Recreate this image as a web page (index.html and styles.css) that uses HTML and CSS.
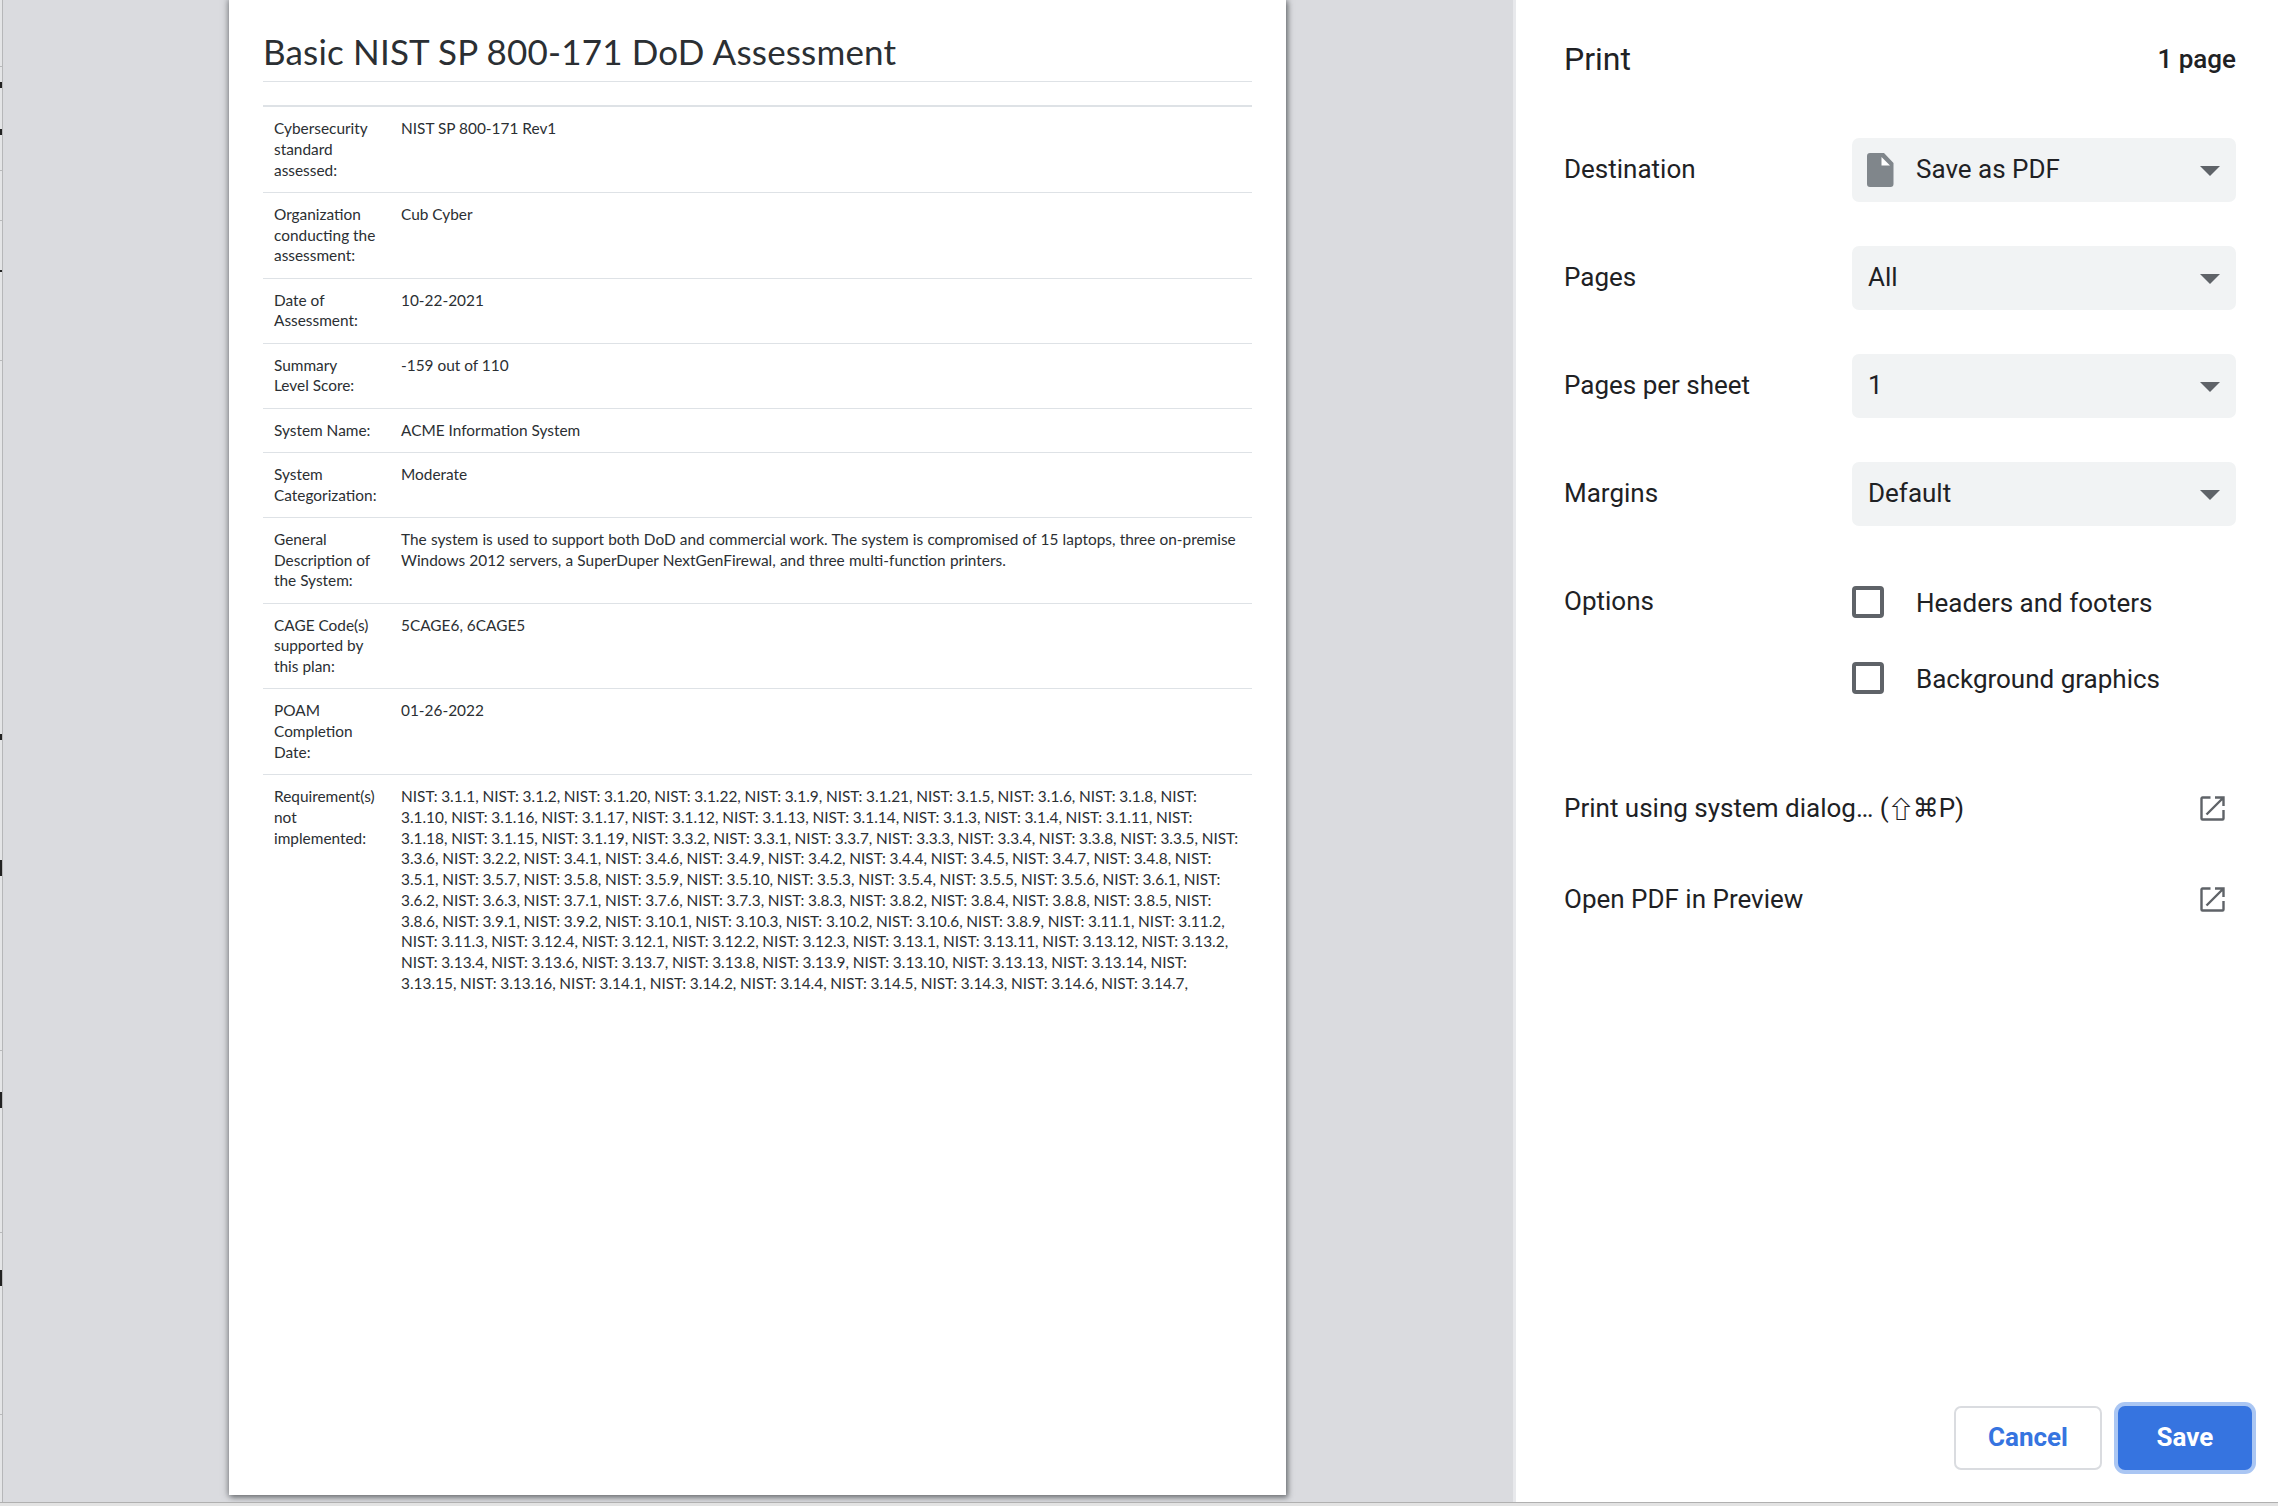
FILE: index.html
```html
<!DOCTYPE html>
<html lang="en">
<head>
<meta charset="utf-8">
<title>Print</title>
<link rel="stylesheet" href="styles.css">
</head>
<body>
<div class="app">
  <div class="main">
    <div class="edge">
      <svg class="edge-marks" width="3" height="1502" viewBox="0 0 3 1502">
        <rect x="0" y="66" width="3" height="1" fill="#b8b9bb"/>
        <rect x="0" y="82" width="2" height="6" fill="#222"/>
        <rect x="0" y="129" width="2" height="6" fill="#222"/>
        <rect x="0" y="170" width="3" height="1" fill="#b8b9bb"/>
        <rect x="0" y="220" width="3" height="1" fill="#b8b9bb"/>
        <rect x="0" y="270" width="2" height="2" fill="#222"/>
        <rect x="0" y="360" width="3" height="1" fill="#b8b9bb"/>
        <rect x="0" y="734" width="2" height="6" fill="#222"/>
        <rect x="0" y="860" width="2" height="16" fill="#222"/>
        <rect x="0" y="1050" width="3" height="1" fill="#b8b9bb"/>
        <rect x="0" y="1092" width="2" height="16" fill="#222"/>
        <rect x="0" y="1232" width="3" height="1" fill="#b8b9bb"/>
        <rect x="0" y="1270" width="2" height="16" fill="#222"/>
        <rect x="0" y="1414" width="3" height="1" fill="#b8b9bb"/>
      </svg>
    </div>
    <div class="preview">
      <div class="sheet">
        <h1 class="doc-title">Basic NIST SP 800-171 DoD Assessment</h1>
        <table class="doc-table">
          <tbody>
            <tr><th>Cybersecurity<br>standard<br>assessed:</th><td>NIST SP 800-171 Rev1</td></tr>
            <tr><th>Organization<br>conducting the<br>assessment:</th><td>Cub Cyber</td></tr>
            <tr><th>Date of<br>Assessment:</th><td>10-22-2021</td></tr>
            <tr><th>Summary<br>Level Score:</th><td>-159 out of 110</td></tr>
            <tr><th>System Name:</th><td>ACME Information System</td></tr>
            <tr><th>System<br>Categorization:</th><td>Moderate</td></tr>
            <tr><th>General<br>Description of<br>the System:</th><td class="desc">The system is used to support both DoD and commercial work. The system is compromised of 15 laptops, three on-premise<br>Windows 2012 servers, a SuperDuper NextGenFirewal, and three multi-function printers.</td></tr>
            <tr><th>CAGE Code(s)<br>supported by<br>this plan:</th><td>5CAGE6, 6CAGE5</td></tr>
            <tr><th>POAM<br>Completion<br>Date:</th><td>01-26-2022</td></tr>
            <tr><th>Requirement(s)<br>not<br>implemented:</th><td class="req-list">NIST: 3.1.1, NIST: 3.1.2, NIST: 3.1.20, NIST: 3.1.22, NIST: 3.1.9, NIST: 3.1.21, NIST: 3.1.5, NIST: 3.1.6, NIST: 3.1.8, NIST:<br>3.1.10, NIST: 3.1.16, NIST: 3.1.17, NIST: 3.1.12, NIST: 3.1.13, NIST: 3.1.14, NIST: 3.1.3, NIST: 3.1.4, NIST: 3.1.11, NIST:<br>3.1.18, NIST: 3.1.15, NIST: 3.1.19, NIST: 3.3.2, NIST: 3.3.1, NIST: 3.3.7, NIST: 3.3.3, NIST: 3.3.4, NIST: 3.3.8, NIST: 3.3.5, NIST:<br>3.3.6, NIST: 3.2.2, NIST: 3.4.1, NIST: 3.4.6, NIST: 3.4.9, NIST: 3.4.2, NIST: 3.4.4, NIST: 3.4.5, NIST: 3.4.7, NIST: 3.4.8, NIST:<br>3.5.1, NIST: 3.5.7, NIST: 3.5.8, NIST: 3.5.9, NIST: 3.5.10, NIST: 3.5.3, NIST: 3.5.4, NIST: 3.5.5, NIST: 3.5.6, NIST: 3.6.1, NIST:<br>3.6.2, NIST: 3.6.3, NIST: 3.7.1, NIST: 3.7.6, NIST: 3.7.3, NIST: 3.8.3, NIST: 3.8.2, NIST: 3.8.4, NIST: 3.8.8, NIST: 3.8.5, NIST:<br>3.8.6, NIST: 3.9.1, NIST: 3.9.2, NIST: 3.10.1, NIST: 3.10.3, NIST: 3.10.2, NIST: 3.10.6, NIST: 3.8.9, NIST: 3.11.1, NIST: 3.11.2,<br>NIST: 3.11.3, NIST: 3.12.4, NIST: 3.12.1, NIST: 3.12.2, NIST: 3.12.3, NIST: 3.13.1, NIST: 3.13.11, NIST: 3.13.12, NIST: 3.13.2,<br>NIST: 3.13.4, NIST: 3.13.6, NIST: 3.13.7, NIST: 3.13.8, NIST: 3.13.9, NIST: 3.13.10, NIST: 3.13.13, NIST: 3.13.14, NIST:<br>3.13.15, NIST: 3.13.16, NIST: 3.14.1, NIST: 3.14.2, NIST: 3.14.4, NIST: 3.14.5, NIST: 3.14.3, NIST: 3.14.6, NIST: 3.14.7,</td></tr>
          </tbody>
        </table>
      </div>
    </div>
    <aside class="panel">
      <header class="panel-head">
        <h2 class="panel-title">Print</h2>
        <span class="page-count">1 page</span>
      </header>
      <div class="setting">
        <span class="setting-label">Destination</span>
        <div class="select select-dest">
          <svg class="file-icon" width="27" height="34" viewBox="0 0 27 34"><path fill="#80868b" d="M3 0H17L26.500 10V31a3 3 0 0 1-3 3H3a3 3 0 0 1-3-3V3a3 3 0 0 1 3-3z"/><path fill="#fff" d="M14.500 4V12.500H23z"/></svg>
          <span class="select-text">Save as PDF</span>
          <i class="caret"></i>
        </div>
      </div>
      <div class="setting">
        <span class="setting-label">Pages</span>
        <div class="select"><span class="select-text">All</span><i class="caret"></i></div>
      </div>
      <div class="setting">
        <span class="setting-label">Pages per sheet</span>
        <div class="select"><span class="select-text">1</span><i class="caret"></i></div>
      </div>
      <div class="setting">
        <span class="setting-label">Margins</span>
        <div class="select"><span class="select-text">Default</span><i class="caret"></i></div>
      </div>
      <div class="options">
        <span class="setting-label">Options</span>
        <div class="option-list">
          <div class="option"><i class="checkbox"></i><span class="option-text">Headers and footers</span></div>
          <div class="option"><i class="checkbox"></i><span class="option-text">Background graphics</span></div>
        </div>
      </div>
      <div class="links">
        <div class="link-row">
          <span class="link-text">Print using system dialog… (<span class="key-glyph">⇧</span>⌘P)</span>
          <svg class="ext-icon" width="25" height="25" viewBox="0 0 25 25"><path fill="none" stroke="#5f6368" stroke-width="2.400" d="M10.500 1.500H2.500a1 1 0 0 0-1 1v20a1 1 0 0 0 1 1h20a1 1 0 0 0 1-1V14"/><path fill="none" stroke="#5f6368" stroke-width="2.400" d="M15 1.500h8.500V10M23.500 1.500L6.500 18.500"/></svg>
        </div>
        <div class="link-row">
          <span class="link-text">Open PDF in Preview</span>
          <svg class="ext-icon" width="25" height="25" viewBox="0 0 25 25"><path fill="none" stroke="#5f6368" stroke-width="2.400" d="M10.500 1.500H2.500a1 1 0 0 0-1 1v20a1 1 0 0 0 1 1h20a1 1 0 0 0 1-1V14"/><path fill="none" stroke="#5f6368" stroke-width="2.400" d="M15 1.500h8.500V10M23.500 1.500L6.500 18.500"/></svg>
        </div>
      </div>
      <footer class="actions">
        <button class="btn btn-cancel" type="button">Cancel</button>
        <button class="btn btn-save" type="button">Save</button>
      </footer>
    </aside>
  </div>
  <div class="bottom-strip"></div>
</div>
</body>
</html>
```
FILE: styles.css
```css
* { box-sizing: border-box; }
html, body { margin: 0; padding: 0; height: 100%; overflow: hidden; }
body { background: #fff; font-family: Roboto, "DejaVu Sans", sans-serif; color: #202124; }
.app { width: 2278px; height: 1506px; display: flex; flex-direction: column; }
.main { height: 1502px; display: flex; }
.bottom-strip { height: 4px; background: #e3e3e3; border-top: 1px solid #b0b0b0; }

.edge { width: 3px; background: #e4e5e7; border-right: 1px solid #b6b7b9; flex: none; }
.edge-marks { display: block; }

.preview { flex: 1; background: #dadbdf; border-right: 3px solid #e8e9ec; padding-left: 226px; overflow: hidden; }
.sheet { width: 1057px; height: 1495px; background: #fff; padding: 0 34px; box-shadow: 0 0 6px 1px rgba(60, 64, 67, .55), 2px 3px 5px rgba(60, 64, 67, .4); }
.doc-title { margin: 0; height: 82px; padding-top: 28px; border-bottom: 1px solid #dee2e6; font: 400 35px/46px "Lato", sans-serif; letter-spacing: .18px; color: #2b2f33; }
.doc-table { border-collapse: collapse; width: 989px; margin-top: 23px; border-top: 2px solid #dee2e6; font: 400 15.400px/20.750px "Lato", sans-serif; color: #2b2f33; }
.doc-table tr { border-bottom: 1px solid #dee2e6; }
.doc-table tr:last-child { border-bottom: 0; }
.doc-table th, .doc-table td { padding: 11px 11px 11.500px; vertical-align: top; text-align: left; font-weight: 400; white-space: nowrap; }
.doc-table th { width: 127px; }
.desc { word-spacing: .3px; }
.req-list { word-spacing: -.27px; }

.panel { width: 762px; flex: none; padding: 37px 42px 0 48px; background: #fff; display: flex; flex-direction: column; font-size: 26px; }
.panel-head { height: 44px; margin-bottom: 57px; display: flex; align-items: center; justify-content: space-between; }
.panel-title { margin: 0; font: 400 32px/44px Roboto, sans-serif; }
.page-count { font-weight: 500; font-size: 26px; }

.setting { height: 64px; margin-bottom: 44px; display: flex; align-items: center; }
.setting-label { width: 288px; flex: none; padding-bottom: 2px; }
.select { flex: 1; height: 64px; border-radius: 7px; background: #f1f3f4; padding-left: 16px; display: flex; align-items: center; position: relative; }
.select-text { padding-bottom: 2px; }
.select-dest { padding-left: 15px; }
.file-icon { margin-right: 22px; flex: none; }
.caret { position: absolute; right: 16px; top: 28px; width: 0; height: 0; border-left: 10px solid transparent; border-right: 10px solid transparent; border-top: 10px solid #5f6368; }

.options { display: flex; align-items: flex-start; }
.options .setting-label { line-height: 62px; padding-bottom: 0; }
.option-list { flex: 1; display: flex; flex-direction: column; gap: 12px; }
.option { height: 64px; display: flex; align-items: center; }
.option-text { padding-top: 2px; }
.checkbox { width: 32px; height: 32px; border: 4px solid #5f6368; border-radius: 4px; margin-right: 32px; flex: none; }

.links { margin-top: 68px; display: flex; flex-direction: column; gap: 31px; }
.link-row { height: 60px; display: flex; align-items: center; justify-content: space-between; padding-right: 11px; }
.link-text { line-height: 30px; height: 30px; }
.key-glyph { display: inline-block; width: 24px; height: 30px; line-height: 30px; vertical-align: top; font-family: "Noto Sans CJK JP", "DejaVu Sans", sans-serif; font-size: 24px; font-weight: 500; transform: scaleX(1.15); }
.ext-icon { flex: none; }

.actions { margin: auto -16px 32px 0; display: flex; justify-content: flex-end; gap: 16px; }
.btn { height: 64px; border-radius: 7px; padding: 0 0 2px; font: 700 26px Roboto, sans-serif; cursor: pointer; }
.btn-cancel { width: 148px; background: #fff; border: 2px solid #dadce0; color: #3674e0; }
.btn-save { width: 134px; background: #3674e0; border: 0; color: #fff; box-shadow: 0 0 0 4px #aac6f3; }
```
